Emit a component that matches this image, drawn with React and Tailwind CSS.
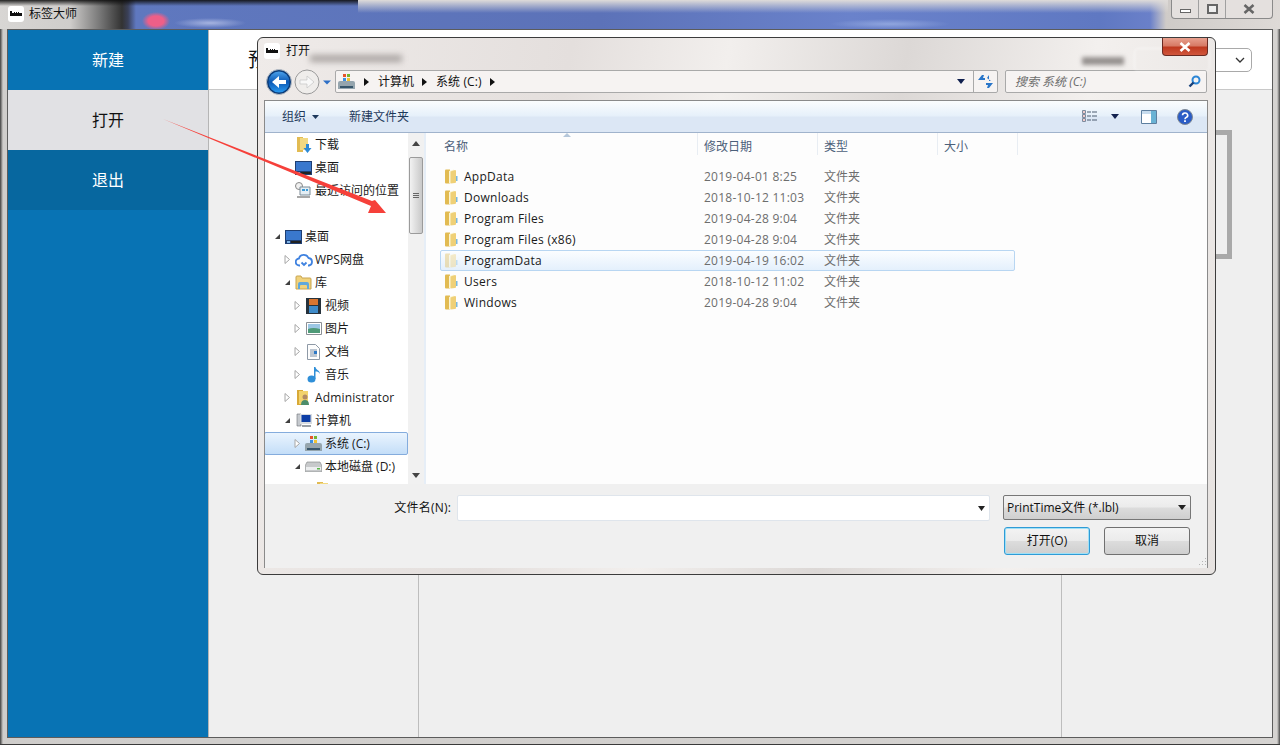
import React from 'react';

const FONT = "font-['Open_Sans','Noto_Sans_CJK_SC',sans-serif]";

const Logo = () => (
  <div className="w-4 h-4 rounded-[3px] bg-white flex items-center justify-center shrink-0">
    <svg width="12" height="6" viewBox="0 0 12 6">
      <path d="M0 0h2v2h2V1h1v1h1V1h1v1h1V1h1v1h3v3H0z" fill="#111" />
    </svg>
  </div>
);

const Folder = ({ faded }) => (
  <svg width="13" height="15" viewBox="0 0 13 15" className={`shrink-0 ${faded ? 'opacity-40' : ''}`}>
    <path d="M0 1.500Q0 .5 1 .5h4v14H1q-1 0-1-1z" fill="#e2bb52" />
    <path d="M4 2 9 .5v12.500l-5 1.500z" fill="#fbf4d2" />
    <path d="M5.500 2.500 10 1q1 0 1 1v11q0 1-1 1l-4.500.5z" fill="#efd077" />
    <path d="M11 7h1.500v5H11z" fill="#7ab8de" />
  </svg>
);

const Expander = ({ open }) =>
  open ? (
    <svg width="7" height="7" viewBox="0 0 7 7" className="shrink-0"><path d="M6 1v5H1z" fill="#404040" /></svg>
  ) : (
    <svg width="7" height="9" viewBox="0 0 7 9" className="shrink-0"><path d="M1 .5 5.500 4.500 1 8.500z" fill="#fff" stroke="#a6a6a6" /></svg>
  );

const treeIcon = {
  download: (
    <svg width="16" height="18" viewBox="0 0 16 18">
      <path d="M1 1h6v15H1z" fill="#e2bb52" />
      <path d="M4 2h8v12H4z" fill="#f2d981" />
      <path d="M10 8h3v4h2.500l-4 5-4-5H10z" fill="#2c8ad6" />
    </svg>
  ),
  desktop: (
    <svg width="17" height="14" viewBox="0 0 17 14">
      <path d="M0 0h17v14H0z" fill="#1f3f73" />
      <path d="M1 1h15v9H1z" fill="#3a78cd" />
      <path d="M6 11h10v2H6z" fill="#222" />
      <path d="M2 11h3v2H2z" fill="#7fb4e6" />
    </svg>
  ),
  recent: (
    <svg width="17" height="17" viewBox="0 0 17 17">
      <circle cx="4" cy="4" r="3.500" fill="#f0f0f0" stroke="#888" />
      <path d="M5 5h10v8H5z" fill="#e4eef4" stroke="#7b8b97" />
      <path d="M7 7h3v2H7zM11 7h2v2h-2z" fill="#3c9ad6" />
      <path d="M2 14h13v2H2z" fill="#a7a7a7" />
    </svg>
  ),
  cloud: (
    <svg width="18" height="14" viewBox="0 0 18 14" fill="none" stroke="#3f82e0" strokeWidth="1.800">
      <path d="M5 12.500H4.500a3.500 3.500 0 0 1-.5-7A5 5 0 0 1 13.500 5a3.800 3.800 0 0 1 .5 7.500h-1" />
      <path d="M6.500 9.500 9 12l2.500-2.500" />
    </svg>
  ),
  library: (
    <svg width="17" height="15" viewBox="0 0 17 15">
      <path d="M1 2q0-1 1-1h4l1 2h8q1 0 1 1v10H1z" fill="#f0d27c" stroke="#c9a550" />
      <path d="M3 14V9q0-2 2-2h7q2 0 2 2v5h-2v-3q0-1-1-1H6q-1 0-1 1v3z" fill="#5fa8dc" />
    </svg>
  ),
  video: (
    <svg width="15" height="16" viewBox="0 0 15 16">
      <path d="M0 0h15v16H0z" fill="#26323c" />
      <path d="M3 1h9v6H3z" fill="#d9752f" />
      <path d="M3 8h9v7H3z" fill="#3f8bc9" />
    </svg>
  ),
  picture: (
    <svg width="16" height="13" viewBox="0 0 16 13">
      <path d="M.5.500h15v12H.500z" fill="#fff" stroke="#8a8f95" />
      <path d="M2 2h12v5H2z" fill="#9cc7e4" />
      <path d="M2 7q5-2 12 0v4H2z" fill="#4f9a78" />
    </svg>
  ),
  document: (
    <svg width="13" height="16" viewBox="0 0 13 16">
      <path d="M.5.500h8l4 4v11H.500z" fill="#fdfdfd" stroke="#8e99a6" />
      <path d="M3 6h7M3 8h4M3 10h7M3 12h7" stroke="#7b8ea6" />
      <path d="M7 7h3v3H7z" fill="#2c78c6" />
    </svg>
  ),
  music: (
    <svg width="14" height="17" viewBox="0 0 14 17">
      <path d="M7 1h1.500c0 3 4.500 3 4.500 7-1-2-2.500-2.500-4.500-2.500V13H7z" fill="#2f8fd8" />
      <ellipse cx="4.500" cy="13" rx="4" ry="3.500" fill="#2f8fd8" />
    </svg>
  ),
  user: (
    <svg width="16" height="17" viewBox="0 0 16 17">
      <path d="M1 1h6v15H1z" fill="#d8a937" />
      <path d="M3 2h9v13H3z" fill="#f2d26d" />
      <circle cx="9" cy="8" r="2.500" fill="#b08a66" />
      <path d="M5 16q0-5 4-5t4 5z" fill="#4d8d6b" />
    </svg>
  ),
  computer: (
    <svg width="16" height="15" viewBox="0 0 16 15">
      <path d="M1 1h4v12H1z" fill="#c5c9ce" stroke="#6b7076" strokeWidth=".600" />
      <path d="M4 1h12v10H4z" fill="#d7dbdf" />
      <path d="M5.500 2h9v7h-9z" fill="#0d3ea6" />
      <path d="M6 12h9v2H6z" fill="#9aa0a6" />
    </svg>
  ),
  system: (
    <svg width="17" height="16" viewBox="0 0 17 16">
      <path d="M5 0h3v3H5z" fill="#e6542c" />
      <path d="M9 0h3v3H9z" fill="#77b52f" />
      <path d="M5 4h3v3H5z" fill="#3d8fe0" />
      <path d="M9 4h3v3H9z" fill="#f2c230" />
      <path d="M0 9q0-2 2-2h13q2 0 2 2v6H0z" fill="#95a5ae" />
      <path d="M2 12h13v2H2z" fill="#38566b" />
    </svg>
  ),
  disk: (
    <svg width="17" height="11" viewBox="0 0 17 11">
      <path d="M2 1h13l2 4v5q0 1-1 1H1q-1 0-1-1V5z" fill="#c7c9cb" stroke="#7d7f82" strokeWidth=".600" />
      <path d="M1 6h15v3H1z" fill="#eceeef" />
      <path d="M12 7h3v1.500h-3z" fill="#59b548" />
    </svg>
  ),
};

const tree = [
  { label: '下载', icon: 'download', level: 1 },
  { label: '桌面', icon: 'desktop', level: 1 },
  { label: '最近访问的位置', icon: 'recent', level: 1 },
  { blank: true },
  { label: '桌面', icon: 'desktop', level: 0, open: true, arrow: true },
  { label: 'WPS网盘', icon: 'cloud', level: 1, arrow: true },
  { label: '库', icon: 'library', level: 1, open: true, arrow: true },
  { label: '视频', icon: 'video', level: 2, arrow: true },
  { label: '图片', icon: 'picture', level: 2, arrow: true },
  { label: '文档', icon: 'document', level: 2, arrow: true },
  { label: '音乐', icon: 'music', level: 2, arrow: true },
  { label: 'Administrator', icon: 'user', level: 1, arrow: true, latin: true },
  { label: '计算机', icon: 'computer', level: 1, open: true, arrow: true },
  { label: '系统 (C:)', icon: 'system', level: 2, arrow: true, selected: true },
  { label: '本地磁盘 (D:)', icon: 'disk', level: 2, open: true, arrow: true },
  { label: '', icon: 'download', level: 3 },
];

const files = [
  ['AppData', '2019-04-01 8:25'],
  ['Downloads', '2018-10-12 11:03'],
  ['Program Files', '2019-04-28 9:04'],
  ['Program Files (x86)', '2019-04-28 9:04'],
  ['ProgramData', '2019-04-19 16:02', true],
  ['Users', '2018-10-12 11:02'],
  ['Windows', '2019-04-28 9:04'],
];

const Crumb = () => (
  <svg width="5" height="8" viewBox="0 0 5 8" className="shrink-0"><path d="M0 0l5 4-5 4z" fill="#111" /></svg>
);

const TreeRow = ({ row }) => {
  if (row.blank) return <div className="h-[23px]" />;
  const indent = ['pl-[9px]', 'pl-[19px]', 'pl-[29px]', 'pl-[39px]'][row.level];
  return (
    <div
      className={`h-[23px] flex items-center ${indent} text-[12px] text-[#1a1a1a] ${
        row.selected ? 'bg-gradient-to-b from-[#eaf4fe] to-[#c4def8] border border-[#84acdd] rounded-[2px] -ml-px' : ''
      }`}
    >
      <div className="w-[9px] flex shrink-0">{row.arrow && <Expander open={row.open} />}</div>
      <div className="w-[21px] flex justify-center shrink-0">{treeIcon[row.icon]}</div>
      <span className={`whitespace-nowrap ml-[1px] ${row.latin ? 'tracking-[0.15px]' : ''}`}>{row.label}</span>
    </div>
  );
};

const Dialog = () => (
  <div className="absolute left-[257px] top-[37px] w-[959px] h-[538px] rounded-[6px] border border-[#3c3c3c] bg-[linear-gradient(100deg,#efebe9_0%,#e4dfdd_30%,#f2efed_45%,#dcd8d6_62%,#f3f0ee_80%,#e6e2e0_100%)] flex flex-col overflow-hidden">
    {/* title row */}
    <div className="h-[32px] shrink-0 relative flex items-start pl-[6px] pt-[5px]">
      <Logo />
      <span className="ml-[6px] text-[12px] leading-[16px] text-[#111]">打开</span>
      {/* what shows through the glass */}
      <div className="absolute left-[52px] top-[17px] w-[92px] h-[7px] bg-[#8d8785] opacity-70 blur-[3px]" />
      <div className="absolute left-[824px] top-[19px] w-[42px] h-[8px] bg-[#6f6a68] opacity-70 blur-[2px]" />
      <div className="absolute left-[876px] top-[10px] w-[76px] h-[24px] rounded-[5px] border border-white opacity-60 blur-[1px]" />
      <div className="absolute right-[7px] top-0 w-[46px] h-[18px] rounded-b-[4px] border border-t-0 border-[#6a2a22] bg-[linear-gradient(180deg,#e8a08e_0%,#d77b66_45%,#bf3a20_55%,#d0563c_100%)] flex items-center justify-center">
        <svg width="12" height="10" viewBox="0 0 12 10">
          <path d="M1.500 1 10.500 9M10.500 1 1.500 9" stroke="#fff" strokeWidth="2.600" />
        </svg>
      </div>
    </div>

    {/* nav row */}
    <div className="h-[23px] shrink-0 flex mx-[6px]">
      <div className="w-[71px] flex items-center shrink-0">
        <svg width="71" height="28" viewBox="0 0 71 28" className="shrink-0">
          <defs>
            <linearGradient id="backBlue" x1="0" y1="0" x2="0" y2="1">
              <stop offset="0" stopColor="#4aa0ea" />
              <stop offset=".5" stopColor="#0c58b4" />
              <stop offset="1" stopColor="#2a9af0" />
            </linearGradient>
          </defs>
          <circle cx="15" cy="14" r="12.500" fill="#0b3c7a" stroke="#b9bec4" />
          <circle cx="15" cy="14" r="10.500" fill="url(#backBlue)" />
          <path d="M8 14 15 8v4h7v4h-7v4z" fill="#fff" />
          <circle cx="43" cy="14" r="12" fill="#efedeb" stroke="#9a9a9a" />
          <path d="M50 14 43 8v4h-7v4h7v4z" fill="#f8f8f8" stroke="#c4c4c4" strokeWidth=".700" />
          <path d="M59 12.500h8l-4 4z" fill="#2e6fc6" />
        </svg>
      </div>
      <div className="w-[663px] flex border border-[#a9a9a9] bg-[#f6f3f2] rounded-[2px] items-center text-[12px] text-[#111]">
        <div className="flex-1 flex items-center pl-[2px] min-w-0">
          <span className="shrink-0">{treeIcon.system}</span>
          <span className="ml-[9px]"><Crumb /></span>
          <span className="ml-[9px]">计算机</span>
          <span className="ml-[8px]"><Crumb /></span>
          <span className="ml-[9px] tracking-[0.1px]">系统 (C:)</span>
          <span className="ml-[8px]"><Crumb /></span>
        </div>
        <div className="w-[24px] flex justify-center">
          <svg width="8" height="5" viewBox="0 0 8 5"><path d="M0 0h8L4 5z" fill="#10204f" /></svg>
        </div>
        <div className="w-[24px] h-full border-l border-[#a9a9a9] flex items-center justify-center">
          <svg width="15" height="13" viewBox="0 0 15 13" fill="#2a76c9">
            <path d="M0 5 4 0h2L5 3h2v2z" />
            <path d="M15 8l-4 5H9l1-3H8V8z" />
            <path d="M11 0v6h2L9 3z" />
          </svg>
        </div>
      </div>
      <div className="ml-[7px] w-[202px] flex items-center justify-between border border-[#a9a9a9] bg-[#f6f3f2] rounded-[2px] pl-[9px] pr-[5px] text-[12px] italic text-[#6d6d6d]">
        <span>搜索 系统 (C:)</span>
        <svg width="13" height="13" viewBox="0 0 13 13" fill="none">
          <circle cx="8" cy="5" r="3.500" stroke="#2c86d6" strokeWidth="2" />
          <path d="M5.500 7.500 1.500 11.500" stroke="#163f7a" strokeWidth="2.400" />
        </svg>
      </div>
    </div>

    {/* inner panel */}
    <div className="mt-[7px] mx-[6px] w-[944px] h-[468px] flex flex-col border-t border-x border-[#8a8a8a] bg-white overflow-hidden">
      {/* toolbar */}
      <div className="h-[32px] shrink-0 flex items-center bg-[linear-gradient(180deg,#fbfdfe_0%,#e6f0fa_48%,#dce7f5_52%,#dce7f5_100%)] border-b border-[#a0b3cc] text-[12px] text-[#1e395b]">
        <span className="ml-[17px]">组织</span>
        <svg width="7" height="4" viewBox="0 0 7 4" className="ml-[6px]"><path d="M0 0h7L3.500 4z" fill="#1e395b" /></svg>
        <span className="ml-[30px]">新建文件夹</span>
        <div className="flex-1" />
        <svg width="16" height="13" viewBox="0 0 16 13" fill="none">
          <path d="M.5.500h3v3h-3zM.5 4.500h3v3h-3zM.5 8.500h3v3h-3z" stroke="#7e8b9d" fill="#fff" />
          <path d="M1.500 2h1M1.500 6h1M1.500 10h1" stroke="#c03535" />
          <path d="M5 2h4M10 2h5M5 6h4M10 6h5M5 10h4M10 10h5" stroke="#4d5c70" />
        </svg>
        <svg width="8" height="5" viewBox="0 0 8 5" className="ml-[13px]"><path d="M0 0h8L4 5z" fill="#14224f" /></svg>
        <svg width="16" height="14" viewBox="0 0 16 14" className="ml-[22px]">
          <path d="M.5.500h15v13H.500z" fill="#fff" stroke="#5d7f9f" />
          <path d="M1 1h14v3H1z" fill="#c7dcee" />
          <path d="M10 1h5v12h-5z" fill="#69b2d4" />
        </svg>
        <svg width="16" height="16" viewBox="0 0 16 16" className="ml-[20px] mr-[14px]">
          <circle cx="8" cy="8" r="7.500" fill="#2a5cc6" stroke="#7e8894" />
          <path d="M5.500 6.200a2.600 2.300 0 1 1 3.700 2.200c-.8.400-1.200.8-1.200 1.800" fill="none" stroke="#fff" strokeWidth="1.600" />
          <path d="M7.100 11.200h1.800V13H7.100z" fill="#fff" />
        </svg>
      </div>

      <div className="flex-1 min-h-0 flex">
        {/* tree */}
        <div className="w-[143px] shrink-0 overflow-hidden">
          {tree.map((row, i) => <TreeRow key={i} row={row} />)}
        </div>
        {/* scrollbar */}
        <div className="w-[16px] shrink-0 bg-[#f1f1f1] flex flex-col items-center">
          <svg width="8" height="5" viewBox="0 0 8 5" className="mt-[8px]"><path d="M4 0l4 5H0z" fill="#444" /></svg>
          <div className="mt-[11px] w-[14px] h-[77px] rounded-[2px] border border-[#9b9b9b] bg-gradient-to-r from-[#f2f2f2] to-[#c9c9c9] flex flex-col items-center justify-center gap-[1px]">
            <div className="w-[6px] h-px bg-[#666]" />
            <div className="w-[6px] h-px bg-[#666]" />
            <div className="w-[6px] h-px bg-[#666]" />
          </div>
          <div className="flex-1" />
          <svg width="8" height="5" viewBox="0 0 8 5" className="mb-[6px]"><path d="M0 0h8L4 5z" fill="#444" /></svg>
        </div>
        {/* file list */}
        <div className="flex-1 min-w-0 border-l-2 border-[#e6eef7] bg-[#fdfdfd] pl-[14px]">
          <div className="h-[22px] flex relative text-[12px] text-[#4c607a]">
            <div className="w-[258px] pl-[4px] border-r border-[#e8edf3] flex items-center pt-[5px]">名称</div>
            <svg width="8" height="4" viewBox="0 0 8 4" className="absolute left-[123px] top-0"><path d="M4 0l4 4H0z" fill="#b5c7da" /></svg>
            <div className="w-[120px] pl-[6px] border-r border-[#e8edf3] flex items-center pt-[5px]">修改日期</div>
            <div className="w-[120px] pl-[6px] border-r border-[#e8edf3] flex items-center pt-[5px]">类型</div>
            <div className="w-[80px] pl-[6px] border-r border-[#e8edf3] flex items-center pt-[5px]">大小</div>
          </div>
          <div className="mt-[11px]">
            {files.map(([name, date, hover]) => (
              <div
                key={name}
                className={`h-[21px] w-[575px] flex items-center rounded-[2px] text-[12px] border ${
                  hover ? 'border-[#b8d6f2] bg-gradient-to-b from-[#fbfdff] to-[#e4f0fc]' : 'border-transparent'
                }`}
              >
                <div className="w-[23px] pl-[4px] shrink-0"><Folder faded={hover} /></div>
                <div className="w-[240px] shrink-0 text-[#1a1a1a] tracking-[0.28px]">{name}</div>
                <div className="w-[120px] shrink-0 text-[#6d6d6d] tracking-[0.25px]">{date}</div>
                <div className="text-[#6d6d6d]">文件夹</div>
              </div>
            ))}
          </div>
        </div>
      </div>

      {/* bottom */}
      <div className="h-[84px] shrink-0 bg-[#f0f0f0] relative text-[12px] text-[#111]">
        <div className="flex items-start pl-[128px] pt-[11px]">
          <span className="w-[58px] h-[26px] flex items-center justify-end tracking-[0.2px] whitespace-nowrap">文件名(N):</span>
          <div className="ml-[6px] w-[533px] h-[26px] bg-white border border-[#dfe5ec] rounded-[2px] flex items-center justify-end pr-[2px]">
            <svg width="7" height="5" viewBox="0 0 7 5" className="mr-[2px]"><path d="M0 0h7L3.500 5z" fill="#222" /></svg>
          </div>
          <div className="ml-[13px] w-[188px] h-[25px] rounded-[2px] border border-[#777] bg-[linear-gradient(180deg,#f3f3f3_0%,#ebebeb_48%,#dcdcdc_52%,#cfcfcf_100%)] flex items-center justify-between pl-[3px] pr-[4px]">
            <span>PrintTime文件 (*.lbl)</span>
            <svg width="8" height="5" viewBox="0 0 8 5"><path d="M0 0h8L4 5z" fill="#222" /></svg>
          </div>
        </div>
        <div className="flex justify-end gap-[14px] pr-[17px] mt-[6px]">
          <button className="w-[86px] h-[28px] rounded-[3px] border border-[#2f9bd6] bg-[linear-gradient(180deg,#f3f3f3_0%,#ebebeb_48%,#dcdcdc_52%,#cfcfcf_100%)] shadow-[inset_0_0_0_1px_#9fe0f6]">打开(O)</button>
          <button className="w-[86px] h-[28px] rounded-[3px] border border-[#707070] bg-[linear-gradient(180deg,#f3f3f3_0%,#ebebeb_48%,#dcdcdc_52%,#cfcfcf_100%)]">取消</button>
        </div>
        <svg width="10" height="8" viewBox="0 0 10 8" className="absolute right-0 bottom-[2px]" fill="#b5b5b5">
          <path d="M8 0h1v1H8zM8 3h1v1H8zM5 3h1v1H5zM8 6h1v1H8zM5 6h1v1H5zM2 6h1v1H2z" />
        </svg>
      </div>
    </div>
  </div>
);

const App = () => {
  return (
    <div className={`relative w-[1280px] h-[745px] overflow-hidden flex flex-col ${FONT} border-b border-[#3a3a3a] bg-[linear-gradient(90deg,#3f3f3f_0,#cfcdcb_3px,#d5d3d1_1277px,#4a4a4a_1280px)]`}>
      {/* window title, the blurred desktop shows through it */}
      <div className="h-[29px] shrink-0 flex items-center pl-[8px] pb-[1px] [background:radial-gradient(ellipse_14px_9px_at_156px_21px,#ee5f88_0%,#ee5f88_55%,transparent_100%),radial-gradient(ellipse_36px_5px_at_210px_23px,rgba(190,200,235,.75),transparent),radial-gradient(ellipse_60px_5px_at_890px_24px,rgba(170,190,235,.6),transparent),linear-gradient(180deg,rgba(15,15,15,.9),rgba(15,15,15,0))_0_0/358px_6px_no-repeat,linear-gradient(180deg,#dedbd9,rgba(222,219,217,0))_358px_0/810px_13px_no-repeat,linear-gradient(90deg,#d8d6d4_0,#cfcdcb_70px,#777_100px,#333_122px,#3a4058_128px,#5f78bf_136px,#5c72b8_600px,#6a82cb_850px,#5f78c2_1100px,#6a80c9_1150px,#cfcbc8_1166px,#dedad7_1280px)]">
        <Logo />
        <span className="ml-[5px] text-[12px] text-[#111]">标签大师</span>
        <div className="flex-1" />
        <div className="w-[102px] h-[19px] self-start mr-[7px] rounded-b-[4px] border border-t-0 border-[#8a8a8a] bg-[#e4e0de] flex items-center">
          <div className="w-[27px] h-full flex items-center justify-center border-r border-[#a0a0a0]">
            <div className="w-[11px] h-[4px] mt-[4px] bg-white border border-[#666]" />
          </div>
          <div className="w-[27px] h-full flex items-center justify-center border-r border-[#a0a0a0]">
            <div className="w-[11px] h-[10px] border-2 border-[#666] bg-[#eee]" />
          </div>
          <div className="flex-1 flex items-center justify-center">
            <svg width="12" height="10" viewBox="0 0 12 10"><path d="M1.500 1 10.500 9M10.500 1 1.500 9" stroke="#666" strokeWidth="2.600" /></svg>
          </div>
        </div>
      </div>

      {/* client area */}
      <div className="flex-1 min-h-0 mx-[7px] mb-[6px] border border-[#5c5c5c] flex bg-[#efefef]">
        <aside className="w-[201px] shrink-0 bg-[#0873b4] flex flex-col text-[16px] text-white border-r border-[#b5b5b5]">
          <div className="h-[60px] flex items-center justify-center">新建</div>
          <div className="h-[60px] flex items-center justify-center bg-[#e1e1e4] text-[#111]">打开</div>
          <div className="h-[60px] flex items-center justify-center bg-[#07679f]">退出</div>
        </aside>
        <main className="flex-1 min-w-0 flex flex-col">
          <header className="h-[60px] shrink-0 bg-white border-b border-[#c8c8c8] flex items-center pl-[39px] pr-[20px]">
            <span className="text-[20px] text-[#111]">预</span>
            <div className="flex-1" />
            <div className="w-[120px] h-[24px] rounded-[5px] border border-[#a9a9a9] bg-white flex items-center justify-end pr-[6px]">
              <svg width="10" height="6" viewBox="0 0 10 6" fill="none"><path d="M1 1l4 4 4-4" stroke="#333" strokeWidth="1.300" /></svg>
            </div>
          </header>
          <div className="flex-1 min-h-0 flex">
            <div className="w-[210px] shrink-0 border-r border-[#bdbdbd]" />
            <div className="w-[643px] shrink-0 border-r border-[#bdbdbd]" />
            <div className="flex-1 min-w-0 pt-[40px] pl-[30px] pr-[40px]">
              <div className="h-[129px] border-[5px] border-[#a9a9a9]" />
            </div>
          </div>
        </main>
      </div>

      <Dialog />

      {/* annotation arrow */}
      <svg width="240" height="110" viewBox="0 0 240 110" className="absolute left-[160px] top-[115px]">
        <path d="M3 4 L212 86 L215 85 L226 98 L208 98 L211 91 Z" fill="#f6403a" />
      </svg>
    </div>
  );
};

export default App;
